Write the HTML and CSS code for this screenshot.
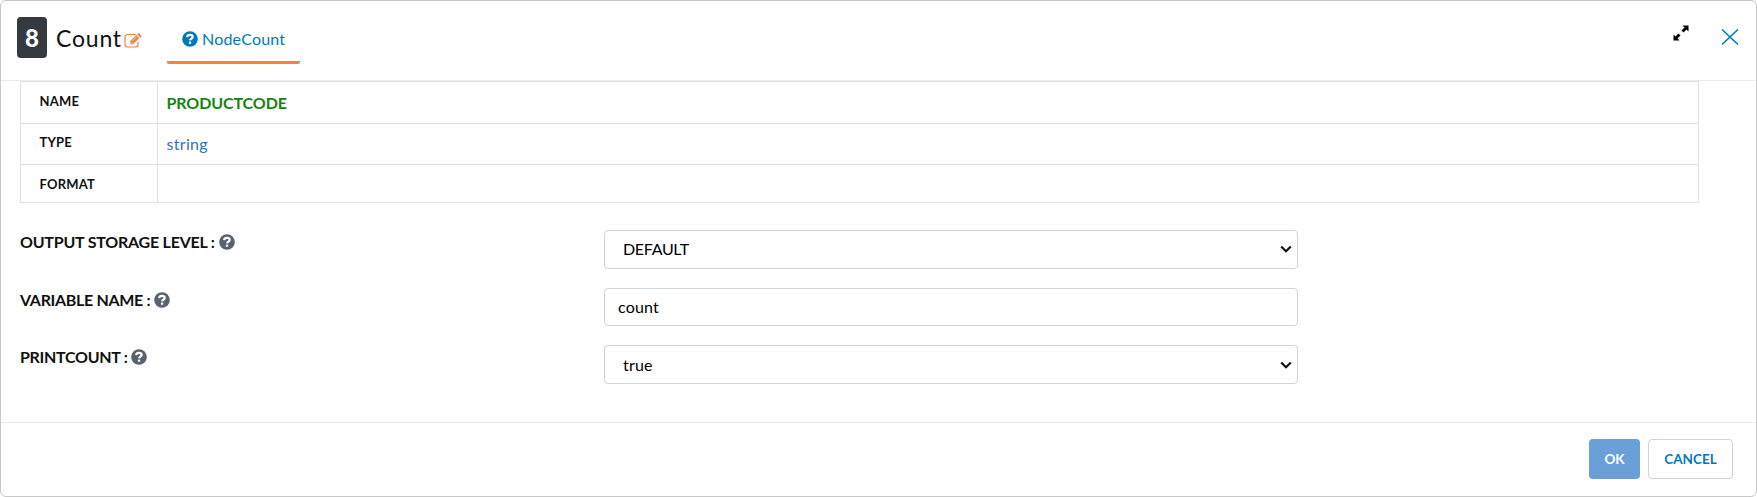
FILE: index.html
```html
<!DOCTYPE html>
<html lang="en">
<head>
<meta charset="utf-8">
<title>Count</title>
<link rel="stylesheet" href="styles.css">
</head>
<body>
<svg class="defs" width="0" height="0" aria-hidden="true">
  <symbol id="help" viewBox="0 0 16 16"><circle cx="8" cy="8" r="7.8" fill="currentColor"/><path d="M5.100 6.200C5.300 4.600 6.400 3.900 8 3.900c1.600 0 2.700.9 2.700 2.200C10.700 7.600 8.300 7.500 8.100 9.400" fill="none" stroke="#fff" stroke-width="2.200"/><rect x="6.900" y="10.500" width="2.300" height="2.300" rx=".6" fill="#fff"/></symbol>
  <symbol id="chevron" viewBox="0 0 12 8"><path d="M1.200 1.500 6 6.200l4.800-4.700" fill="none" stroke="#111" stroke-width="2.100"/></symbol>
</svg>
<main class="dialog">
  <header class="header">
    <span class="badge">8</span>
    <h1 class="title">Count</h1>
    <svg class="edit" viewBox="0 0 18 15"><path d="M12 1.500H3.500A2.500 2.500 0 0 0 1 4v7.500A2.500 2.500 0 0 0 3.500 14h8a2.500 2.500 0 0 0 2.500-2.500V9" fill="none" stroke="#f0803c" stroke-width="1.200"/><path d="m6 8.200 6.300-6.300 3 3L9 11.200H6zM13 1.200l.8-.8q.6-.6 1.200 0l2.200 2.200q.5.600 0 1.200l-.9.900z" fill="#f0803c"/><path d="m8.400 7.900 4.200-4.200M6.700 8.700v1.500h1.500" fill="none" stroke="#fff" stroke-width=".7"/></svg>
    <nav class="tab"><svg class="help"><use href="#help"/></svg><span class="tab-text">NodeCount</span></nav>
    <div class="tools">
      <svg class="expand" viewBox="0 0 16 16"><path d="M9.500.500H15.500V6.500L13.500 4.500 10.500 7.500 8.500 5.500 11.500 2.500zM.500 9.500v6h6l-2-2 3-3-2-2-3 3z" fill="#000"/></svg>
      <svg class="close" viewBox="0 0 18 16"><path d="m1 .5 16 15m0-15-16 15" fill="none" stroke="#0780b5" stroke-width="1.600"/></svg>
    </div>
  </header>
  <section class="body">
    <table class="schema">
      <tr class="row-name"><th>NAME</th><td class="name">PRODUCTCODE</td></tr>
      <tr class="row-type"><th>TYPE</th><td class="type">string</td></tr>
      <tr class="row-format"><th>FORMAT</th><td></td></tr>
    </table>
    <div class="form">
      <div class="label"><span class="l-storage">OUTPUT STORAGE LEVEL :</span><svg class="help"><use href="#help"/></svg></div>
      <div class="field select"><span class="v-default">DEFAULT</span><svg class="chevron"><use href="#chevron"/></svg></div>
      <div class="label"><span class="l-variable">VARIABLE NAME :</span><svg class="help"><use href="#help"/></svg></div>
      <div class="field input"><span class="v-count">count</span></div>
      <div class="label"><span class="l-print">PRINTCOUNT :</span><svg class="help"><use href="#help"/></svg></div>
      <div class="field select last"><span class="v-true">true</span><svg class="chevron"><use href="#chevron"/></svg></div>
    </div>
  </section>
  <footer class="footer">
    <button class="btn ok">OK</button>
    <button class="btn cancel">CANCEL</button>
  </footer>
</main>
</body>
</html>
```
FILE: styles.css
```css
* { box-sizing: border-box; }
body { margin: 0; background: #fff; font-family: Lato, "Liberation Sans", sans-serif; font-size: 16px; color: #111; }
svg { display: block; flex: none; }
.defs { position: absolute; }
.dialog { height: 497px; border: 1px solid #c8c8c8; border-radius: 6px; display: flex; flex-direction: column; }
.header { height: 80px; border-bottom: 1px solid #e9ecef; display: flex; align-items: flex-start; padding-left: 16px; margin-right: 1px; }
.badge { width: 30px; height: 41px; margin-top: 16px; background: #343a40; border-radius: 4px; color: #fff; font-weight: 900; font-size: 24px; line-height: 42px; text-align: center; }
.title { margin: 21px 0 0 9px; width: 68px; font-size: 23px; line-height: 32px; font-weight: 400; letter-spacing: .8px; white-space: nowrap; }
.edit { width: 18px; height: 15px; margin-top: 32px; }
.tab { margin: 19px 0 0 25px; width: 133px; height: 44px; border-bottom: 3px solid #f5813f; border-radius: 2px; color: #007bb8; display: flex; padding: 11px 0 0 15px; }
.help { width: 16px; height: 16px; color: #59636e; }
.tab .help { color: #007bb8; }
.tab-text { margin: -1px 0 0 4px; line-height: 18px; letter-spacing: .2px; }
.tools { margin-left: auto; display: flex; gap: 32px; padding: 24px 16px 0 0; }
.expand { width: 16px; height: 16px; }
.close { width: 18px; height: 16px; margin-top: 4px; }
.body { flex: 1; }
.schema { width: 1679px; margin-left: 19px; border-collapse: collapse; table-layout: fixed; }
.schema th, .schema td { border: 1px solid #dee2e6; vertical-align: top; text-align: left; }
.schema th { width: 137px; padding: 11px 0 0 18.500px; font-size: 13px; line-height: 16px; font-weight: 700; letter-spacing: .2px; }
.schema .row-type th { padding-top: 10px; }
.schema td { padding: 11px 0 0 8.500px; line-height: 20px; }
.row-name { height: 42px; }
.row-type { height: 41px; }
.row-format { height: 38px; }
.schema .name { color: #128512; font-weight: 700; letter-spacing: -.1px; }
.schema .type { padding-top: 10px; color: #3075b8; letter-spacing: .3px; }
.form { display: grid; grid-template-columns: 584px 694px; grid-template-rows: 39px 38px 39px; row-gap: 19px; margin: 27px 0 0 19px; }
.label { display: flex; gap: 4px; padding-top: 4px; font-weight: 700; line-height: 18px; white-space: nowrap; }
.label span { margin-top: -1px; }
.l-storage { letter-spacing: -.22px; }
.l-variable { letter-spacing: -.33px; }
.l-print { letter-spacing: -.3px; }
.field { border: 1px solid #ced4da; border-radius: 4px; display: flex; align-items: center; justify-content: space-between; padding: 0 5px 2px 18px; color: #000; }
.v-default { letter-spacing: -.3px; }
.v-count, .v-true { letter-spacing: .2px; }
.field.input { padding: 0 5px 1px 13px; }
.field.last { padding-bottom: 0; }
.chevron { width: 12px; height: 8px; }
.footer { height: 74px; border-top: 1px solid #e9ecef; margin-right: 1px; padding: 16px 22px 0 0; display: flex; justify-content: flex-end; gap: 8px; }
.btn { height: 40px; border-radius: 4px; font: 700 13.500px Lato, sans-serif; padding: 0 0 1px; }
.ok { width: 51px; border: 0; background: #6a9fd8; color: #fff; }
.cancel { width: 85px; border: 1px solid #ced4da; background: #fff; color: #007bb8; }
```
